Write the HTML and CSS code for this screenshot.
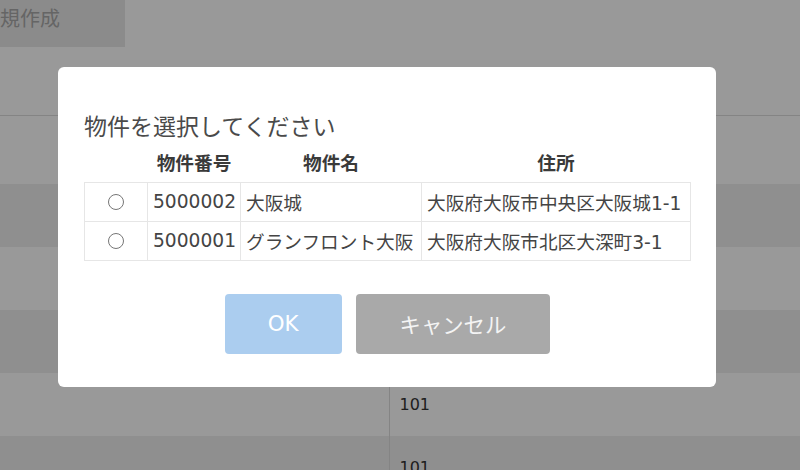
FILE: index.html
```html
<!DOCTYPE html>
<html lang="ja">
<head>
  <meta charset="UTF-8" />
  <meta name="viewport" content="width=device-width, initial-scale=1.0"/>
  <title>物件選択</title>
  <link rel="stylesheet" href="styles.css">
</head>
<body>
  <!-- Page behind the dialog -->
  <div class="page">
    <div class="toolbar">
      <button class="new-btn">新規作成</button>
    </div>
    <table class="list">
      <colgroup>
        <col class="list-key" />
        <col />
      </colgroup>
      <thead>
        <tr><th></th><th></th></tr>
      </thead>
      <tbody>
        <tr><td></td><td></td></tr>
        <tr><td></td><td></td></tr>
        <tr><td></td><td></td></tr>
        <tr><td></td><td>101</td></tr>
        <tr><td></td><td>101</td></tr>
      </tbody>
    </table>
  </div>

  <!-- Select dialog -->
  <div class="overlay">
    <div class="modal">
      <h2 class="modal-title">物件を選択してください</h2>
      <table class="pick">
        <colgroup>
          <col class="c-radio" />
          <col class="c-no" />
          <col class="c-name" />
          <col class="c-addr" />
        </colgroup>
        <thead>
          <tr>
            <th></th>
            <th>物件番号</th>
            <th>物件名</th>
            <th>住所</th>
          </tr>
        </thead>
        <tbody>
          <tr>
            <td class="radio-cell"><input type="radio" name="bukken" value="5000002" /></td>
            <td>5000002</td>
            <td>大阪城</td>
            <td>大阪府大阪市中央区大阪城1-1</td>
          </tr>
          <tr>
            <td class="radio-cell"><input type="radio" name="bukken" value="5000001" /></td>
            <td>5000001</td>
            <td>グランフロント大阪</td>
            <td>大阪府大阪市北区大深町3-1</td>
          </tr>
        </tbody>
      </table>
      <div class="modal-actions">
        <button class="btn btn-ok">OK</button>
        <button class="btn btn-cancel">キャンセル</button>
      </div>
    </div>
  </div>
</body>
</html>
```

FILE: styles.css
```css
* {
  box-sizing: border-box;
}
body {
  font-family: "DejaVu Sans", "Noto Sans CJK JP", sans-serif;
  background: #fff;
  color: #333;
  margin: 0;
  width: 800px;
  height: 470px;
  overflow: hidden;
}

/* background page */
.toolbar {
  height: 115px;
}
.new-btn {
  display: block;
  margin-left: -20px;
  width: 145px;
  height: 47px;
  padding: 0 0 12px 0;
  border: none;
  background: #e8e8e8;
  color: #a8a8a8;
  font-family: "Noto Sans CJK JP", sans-serif;
  font-size: 20px;
  text-align: left;
}
.list {
  width: 100%;
  border-collapse: collapse;
  border-top: 1px solid #ddd;
}
.list-key {
  width: 389px;
}
.list th {
  height: 68px;
}
.list td {
  height: 63px;
  padding: 0 10px;
  font-size: 16px;
  color: #333;
}
.list td + td {
  border-left: 1px solid #ddd;
}
.list tbody tr:nth-child(odd) {
  background: #eee;
}

/* dialog */
.overlay {
  position: fixed;
  top: 0;
  left: 0;
  right: 0;
  bottom: 0;
  background: rgba(0,0,0,0.4);
  padding: 67px 0 0 58px;
}
.modal {
  width: 658px;
  background: #fff;
  border-radius: 6px;
  padding: 42px 25px 33px 26px;
}
.modal-title {
  margin: 0;
  font-family: "Noto Sans CJK JP", sans-serif;
  font-size: 23px;
  font-weight: normal;
  line-height: 32px;
  color: #4a4a4a;
}
.pick {
  width: 606px;
  table-layout: fixed;
  border-collapse: collapse;
  font-size: 14pt;
  white-space: nowrap;
}
.c-radio { width: 63px; }
.c-no { width: 93px; }
.c-name { width: 181px; }
.c-addr { width: 269px; }
.pick th {
  height: 41px;
  padding: 0;
  font-weight: bold;
  text-align: center;
  color: #3a3a3a;
}
.pick td {
  height: 39px;
  padding: 0 5px;
  border: 1px solid #e6e6e6;
  color: #444;
}
.pick td.radio-cell {
  text-align: center;
  padding: 0;
}
.radio-cell input {
  width: 16px;
  height: 16px;
  margin: 0 0 2px 0;
  vertical-align: middle;
}
.modal-actions {
  display: flex;
  justify-content: center;
  gap: 14px;
  margin-top: 33px;
}
.btn {
  height: 60px;
  padding: 0 43px;
  border: none;
  border-radius: 4px;
  font-family: "DejaVu Sans", "Noto Sans CJK JP", sans-serif;
  font-size: 16pt;
  color: #fff;
}
.btn-ok {
  background: #abcdef;
}
.btn-cancel {
  background: #a9a9a9;
  color: #f4f4f4;
  padding: 0 44px;
}
```
